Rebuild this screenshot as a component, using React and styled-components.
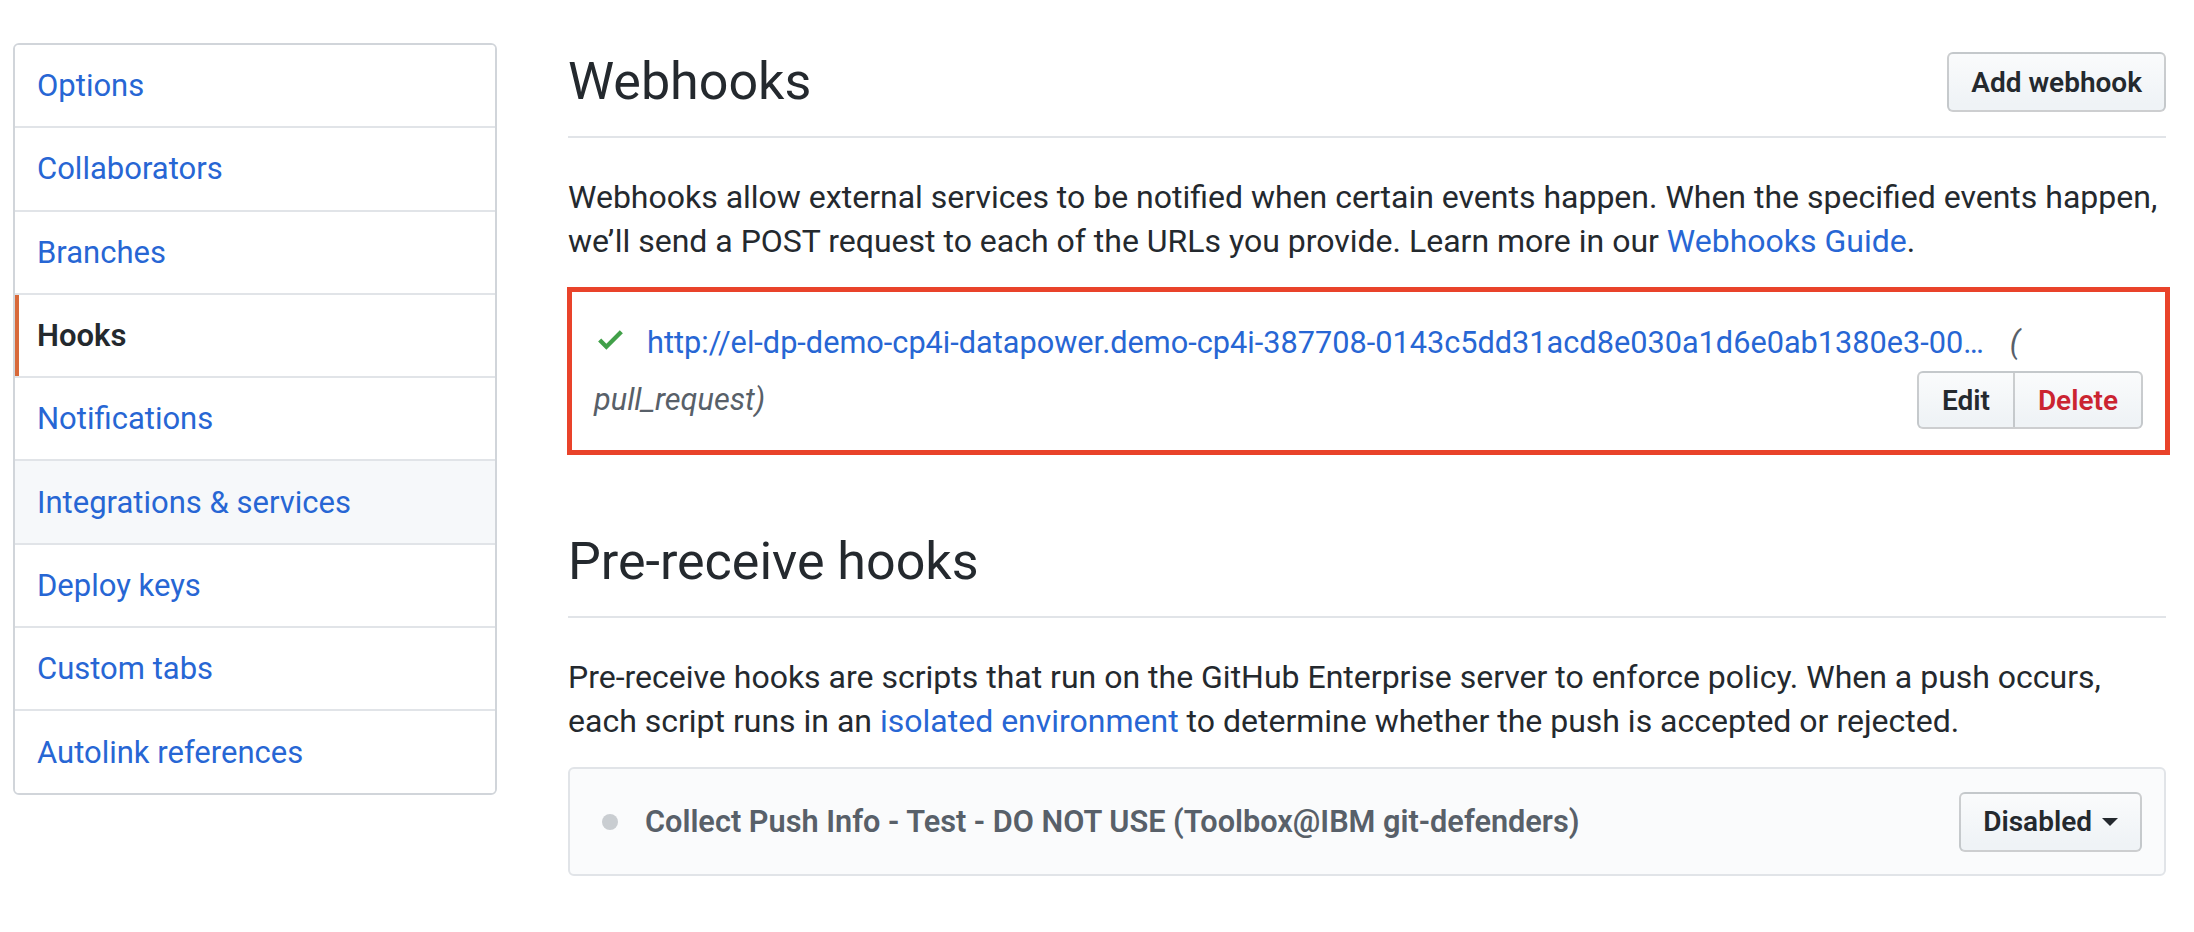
import React from "react"
import styled, { createGlobalStyle, css } from "styled-components"

const GlobalStyle = createGlobalStyle`
  body {
    margin: 0;
    background: #fff;
    color: #24292e;
    font-family: Roboto, "Liberation Sans", Arial, sans-serif;
  }
`

const Page = styled.div`
  display: flex;
  align-items: flex-start;
  gap: 71px;
  padding: 43px 28px 40px 13px;
`

const Sidebar = styled.nav`
  flex: 0 0 484px;
  box-sizing: border-box;
  border: 2px solid #d1d5da;
  border-radius: 6px;
  overflow: hidden;
`

const MenuItem = styled.a`
  display: flex;
  align-items: center;
  height: 81.3px;
  padding: 0 24px 0 22px;
  font-size: 31px;
  color: #2766d4;
  text-decoration: none;
  border-bottom: 2px solid #e1e4e8;
  background: ${(p) => (p.$hover ? "#f6f8fa" : "#fff")};

  &:last-child {
    border-bottom: 0;
  }

  ${(p) =>
    p.$selected &&
    css`
      color: #24292e;
      font-weight: 600;
      box-shadow: inset 4px 0 0 #d8693a;
    `}
`

const Main = styled.main`
  flex: 1;
  min-width: 0;
  padding-top: 8px;
`

const Subhead = styled.div`
  display: flex;
  align-items: center;
  padding-bottom: 23px;
  border-bottom: 2px solid #e1e4e8;
  margin-top: ${(p) => (p.$spaced ? "76px" : "0")};
`

const Heading = styled.h2`
  flex: 1;
  margin: 0;
  font-size: 52px;
  font-weight: 400;
  line-height: 62px;
  color: #24292e;
`

const buttonBase = css`
  display: inline-flex;
  align-items: center;
  box-sizing: border-box;
  font-family: inherit;
  font-size: 28px;
  font-weight: 600;
  color: #24292e;
  background-color: #eff3f6;
  background-image: linear-gradient(-180deg, #fafbfc 0%, #eff3f6 90%);
  border: 2px solid rgba(27, 31, 35, 0.2);
  white-space: nowrap;
  cursor: pointer;
`

const Button = styled.button`
  ${buttonBase};
  height: 60px;
  padding: 0 22px;
  border-radius: 6px;
  margin-left: auto;
`

const Description = styled.p`
  margin: 37px 0 24px;
  font-size: 32px;
  line-height: 44px;
  color: #24292e;
`

const Link = styled.a`
  color: #2766d4;
  text-decoration: none;
`

const HookBox = styled.div`
  margin: 0 -4px 0 -1px;
  border: 5px solid #e9432a;
  padding: 31px 22px 21px 22px;
`

const HookLine = styled.div`
  display: flex;
  align-items: flex-start;
  font-size: 30.7px;
  line-height: 40px;
`

const StatusCheck = styled.svg`
  flex: 0 0 auto;
  margin: 0 24px 0 4px;
  fill: #41a049;
`

const HookUrl = styled.a`
  color: #2766d4;
  text-decoration: none;
  white-space: nowrap;
`

const Muted = styled.span`
  color: #586069;
  font-style: italic;
  margin-left: ${(p) => p.$gap || 0}px;
`

const HookFooter = styled.div`
  display: flex;
  align-items: center;
  justify-content: space-between;
  margin-top: 8px;
  font-size: 30.7px;
  line-height: 40px;
`

const ButtonGroup = styled.div`
  display: flex;
`

const GroupButton = styled.button`
  ${buttonBase};
  height: 58px;
  padding: 0 23px;
  color: ${(p) => (p.$danger ? "#cb2431" : "#24292e")};
  border-radius: 0;

  &:first-child {
    border-radius: 6px 0 0 6px;
    border-right-width: 0;
  }
  &:last-child {
    border-radius: 0 6px 6px 0;
  }
`

const PreReceiveItem = styled.div`
  display: flex;
  align-items: center;
  box-sizing: border-box;
  height: 109px;
  padding: 0 22px 0 32px;
  background: #fafbfc;
  border: 2px solid #e1e4e8;
  border-radius: 6px;
`

const StatusDot = styled.span`
  flex: 0 0 16px;
  height: 16px;
  border-radius: 50%;
  background: #c9cdd1;
`

const HookName = styled.span`
  margin-left: 27px;
  font-size: 30.7px;
  font-weight: 600;
  color: #586069;
`

const Caret = styled.svg`
  margin-left: 10px;
  fill: #24292e;
`

const menu = [
  "Options",
  "Collaborators",
  "Branches",
  "Hooks",
  "Notifications",
  "Integrations & services",
  "Deploy keys",
  "Custom tabs",
  "Autolink references",
]

const App = () => {
  return (
    <>
      <GlobalStyle />
      <Page>
        <Sidebar>
          {menu.map((item) => (
            <MenuItem
              key={item}
              href="#"
              $selected={item === "Hooks"}
              $hover={item === "Integrations & services"}
            >
              {item}
            </MenuItem>
          ))}
        </Sidebar>

        <Main>
          <Subhead>
            <Heading>Webhooks</Heading>
            <Button>Add webhook</Button>
          </Subhead>
          <Description>
            Webhooks allow external services to be notified when certain events
            happen. When the specified events happen, we’ll send a POST request
            to each of the URLs you provide. Learn more in our{" "}
            <Link href="#">Webhooks Guide</Link>.
          </Description>

          <HookBox>
            <HookLine>
              <StatusCheck width="25" height="33" viewBox="0 0 12 16">
                <path d="M12 5l-8 8-4-4 1.5-1.5L4 10l6.5-6.5L12 5z" />
              </StatusCheck>
              <HookUrl href="#">
                http://el-dp-demo-cp4i-datapower.demo-cp4i-387708-0143c5dd31acd8e030a1d6e0ab1380e3-00…
              </HookUrl>
              <Muted $gap={26}>(</Muted>
            </HookLine>
            <HookFooter>
              <Muted>pull_request)</Muted>
              <ButtonGroup>
                <GroupButton>Edit</GroupButton>
                <GroupButton $danger>Delete</GroupButton>
              </ButtonGroup>
            </HookFooter>
          </HookBox>

          <Subhead $spaced>
            <Heading>Pre-receive hooks</Heading>
          </Subhead>
          <Description>
            Pre-receive hooks are scripts that run on the GitHub Enterprise
            server to enforce policy. When a push occurs,
            <br />
            each script runs in an <Link href="#">isolated environment</Link> to
            determine whether the push is accepted or rejected.
          </Description>

          <PreReceiveItem>
            <StatusDot />
            <HookName>
              Collect Push Info - Test - DO NOT USE (Toolbox@IBM git-defenders)
            </HookName>
            <Button as="div">
              Disabled
              <Caret width="16" height="8" viewBox="0 0 16 8">
                <polygon points="0,0 16,0 8,8" />
              </Caret>
            </Button>
          </PreReceiveItem>
        </Main>
      </Page>
    </>
  )
}

export default App
